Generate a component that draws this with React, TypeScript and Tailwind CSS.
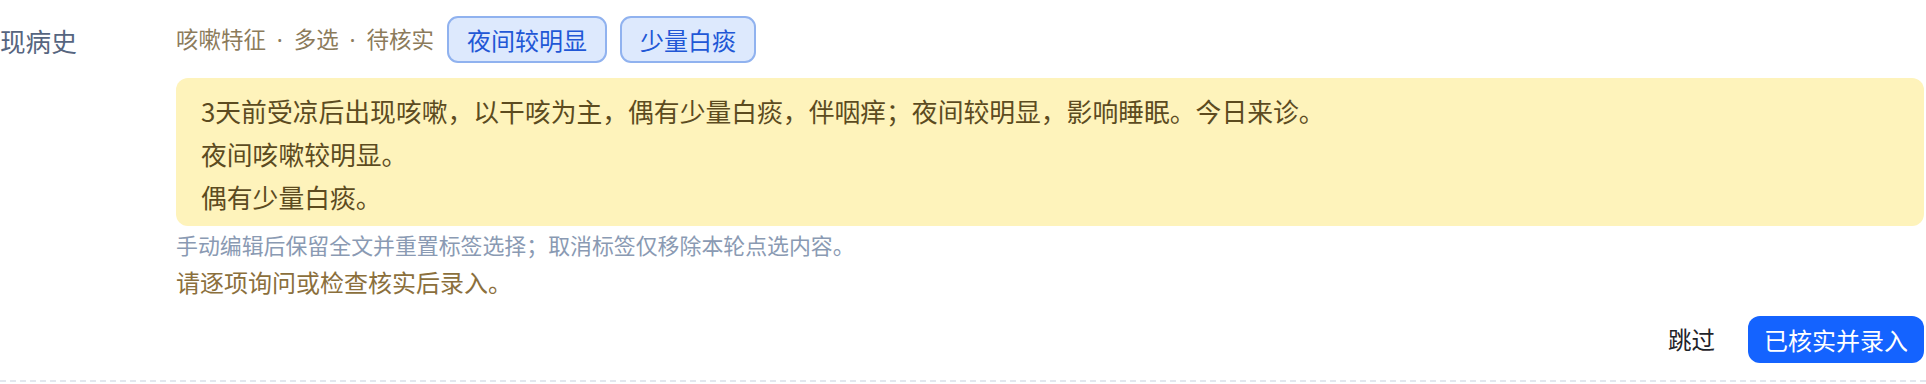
import React from 'react';

const tags = ['夜间较明显', '少量白痰'];

const lines = [
  '3天前受凉后出现咳嗽，以干咳为主，偶有少量白痰，伴咽痒；夜间较明显，影响睡眠。今日来诊。',
  '夜间咳嗽较明显。',
  '偶有少量白痰。',
];

const Dot = () => (
  <span className="px-[5px]" style={{ fontFamily: '"Noto Sans", sans-serif' }}>
    {' · '}
  </span>
);

export default function App() {
  return (
    <div
      className="flex w-full bg-white border-b-2 border-dashed border-[#e3e7ee]"
      style={{ fontFamily: '"Noto Sans CJK SC", "Noto Sans", sans-serif' }}
    >
      <div className="w-[176px] shrink-0 pt-[22px] text-[25.6px] leading-[38px] text-[#56657f]">
        现病史
      </div>

      <div className="flex-1 pr-[2px] pt-[16px] pb-[17px]">
        <div className="flex items-center gap-[13px] h-[47px]">
          <span className="text-[22.5px] text-[#8c7b5b]">
            咳嗽特征<Dot />多选<Dot />待核实
          </span>
          {tags.map((t) => (
            <button
              key={t}
              className="h-[47px] px-[18px] rounded-[11px] border-2 border-[#90b2ef] bg-[#dde9fd] text-[24px] text-[#2157d6]"
            >
              {t}
            </button>
          ))}
        </div>

        <div className="mt-[15px] rounded-[12px] bg-[#fef3bb] pl-[25px] pr-4 pt-[11px] pb-[8px] text-[25.8px] leading-[43px] text-[#5c4b1f]">
          {lines.map((l) => (
            <div key={l}>{l}</div>
          ))}
        </div>

        <p className="mt-[4px] text-[21.9px] leading-[30px] text-[#8a9ab3]">
          手动编辑后保留全文并重置标签选择；取消标签仅移除本轮点选内容。
        </p>
        <p className="mt-[5px] text-[24px] leading-[34px] text-[#8b6f3c]">
          请逐项询问或检查核实后录入。
        </p>

        <div className="mt-[17px] flex items-center justify-end gap-[20px]">
          <button className="h-[47px] px-[13px] text-[23.5px] text-[#1f2329]">跳过</button>
          <button className="h-[47px] px-[16px] rounded-[12px] bg-[#1463ff] text-[24px] text-white">
            已核实并录入
          </button>
        </div>
      </div>
    </div>
  );
}
